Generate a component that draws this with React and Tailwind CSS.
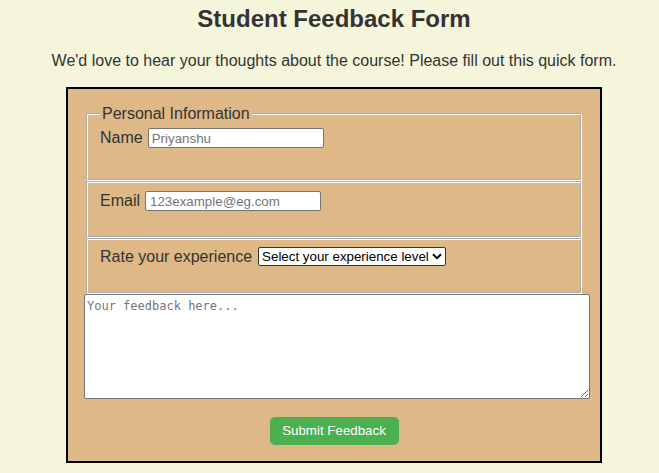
import React from "react";

export default function App() {
  return (
    <div className="min-h-screen w-full bg-[#f5f5dc] text-[#333] [font-family:'Liberation_Sans',Arial,sans-serif]">
      <div className="flex flex-col items-center pl-[9px] pt-[5px]">
        <h1 className="text-[24px] font-bold leading-[28px]">Student Feedback Form</h1>
        <p className="mt-[19px] text-[16px] leading-[18px]">
          We'd love to hear your thoughts about the course! Please fill out this quick form.
        </p>
        <form
          className="mt-[17px] w-[536px] border-2 border-black bg-[#deb887] p-[16px]"
          onSubmit={(e) => e.preventDefault()}
        >
          <fieldset className="mx-[2px] border-2 border-white [border-style:groove] px-[12px] pb-[31px]">
            <legend className="px-[2px] text-[16px] leading-[18px]">Personal Information</legend>
            <div className="mt-[5px] flex h-[20px] items-center">
              <label className="text-[16px] leading-[18px]">Name</label>
              <input
                type="text"
                placeholder="Priyanshu"
                className="ml-[5px] block h-[20px] w-[176px] rounded-[2px] border border-[#767676] bg-white px-[3px] text-[13.33px] text-black placeholder:text-[#757575] [font-family:'Liberation_Sans',Arial,sans-serif]"
              />
            </div>
          </fieldset>
          <fieldset className="mx-[2px] border-2 border-white [border-style:groove] px-[12px] pt-[8px] pb-[25px]">
            <div className="flex h-[20px] items-center">
              <label className="text-[16px] leading-[18px]">Email</label>
              <input
                type="email"
                placeholder="123example@eg.com"
                className="ml-[5px] block h-[20px] w-[176px] rounded-[2px] border border-[#767676] bg-white px-[4px] text-[13.33px] text-black placeholder:text-[#757575] [font-family:'Liberation_Sans',Arial,sans-serif]"
              />
            </div>
          </fieldset>
          <fieldset className="mx-[2px] border-2 border-white [border-style:groove] px-[12px] pt-[7px] pb-[26px]">
            <div className="flex h-[19px] items-center">
              <label className="text-[16px] leading-[18px]">Rate your experience</label>
              <div className="relative ml-[6px] flex h-[19px] w-[188px]">
                <select
                  defaultValue=""
                  className="block h-[19px] w-[188px] appearance-none rounded-[2px] border border-[#333] bg-white pl-[3px] text-[13.33px] leading-[15px] text-black [font-family:'Liberation_Sans',Arial,sans-serif]"
                >
                  <option value="" disabled>
                    Select your experience level
                  </option>
                  <option value="excellent">Excellent</option>
                  <option value="good">Good</option>
                  <option value="average">Average</option>
                  <option value="poor">Poor</option>
                </select>
                <svg
                  className="pointer-events-none absolute right-[4px] top-[6px]"
                  width="10"
                  height="7"
                  viewBox="0 0 10 7"
                >
                  <path d="M1 1.2 L5 5.2 L9 1.2" fill="none" stroke="#000" strokeWidth="2" />
                </svg>
              </div>
            </div>
          </fieldset>
          <textarea
            placeholder="Your feedback here..."
            className="block h-[105px] w-[506px] rounded-[2px] border border-[#767676] bg-white px-[2px] pt-[3px] text-[12px] leading-[16px] text-black placeholder:text-[#757575] [font-family:'DejaVu_Sans_Mono',monospace]"
          />
          <div className="mt-[18px] flex justify-center">
            <button
              type="submit"
              className="h-[28px] w-[129px] rounded-[5px] bg-[#4caf50] text-[13.33px] text-white [font-family:'Liberation_Sans',Arial,sans-serif]"
            >
              Submit Feedback
            </button>
          </div>
        </form>
      </div>
    </div>
  );
}
